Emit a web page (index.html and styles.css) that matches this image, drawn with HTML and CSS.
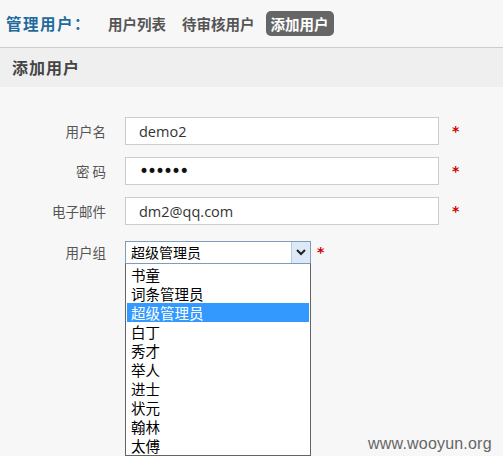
FILE: index.html
```html
<!DOCTYPE html>
<html lang="zh-CN">
<head>
<meta charset="utf-8">
<title>添加用户</title>
<link rel="stylesheet" href="styles.css">
</head>
<body>
<div class="page">
  <div class="topbar">
    <span class="topbar-title">管理用户：</span>
    <a class="tab">用户列表</a>
    <a class="tab">待审核用户</a>
    <a class="tab tab-active">添加用户</a>
  </div>
  <div class="section-head">添加用户</div>
  <form class="form">
    <div class="row">
      <label class="label">用户名</label>
      <input class="field" type="text" value="demo2">
      <span class="req">*</span>
    </div>
    <div class="row">
      <label class="label">密 码</label>
      <input class="field field-pass" type="password" value="123456">
      <span class="req">*</span>
    </div>
    <div class="row">
      <label class="label">电子邮件</label>
      <input class="field" type="text" value="dm2@qq.com">
      <span class="req">*</span>
    </div>
    <div class="row row-select">
      <label class="label">用户组</label>
      <div class="select-wrap">
        <div class="select">
          <span class="select-value">超级管理员</span>
          <span class="select-btn">
            <svg width="10" height="7" viewBox="0 0 10 7"><polyline points="1,1 5,5 9,1" fill="none" stroke="#222" stroke-width="2"/></svg>
          </span>
        </div>
        <ul class="dropdown">
          <li>书童</li>
          <li>词条管理员</li>
          <li class="selected">超级管理员</li>
          <li>白丁</li>
          <li>秀才</li>
          <li>举人</li>
          <li>进士</li>
          <li>状元</li>
          <li>翰林</li>
          <li>太傅</li>
        </ul>
      </div>
      <span class="req req-select">*</span>
    </div>
  </form>
  <div class="watermark">www.wooyun.org</div>
</div>
</body>
</html>
```

FILE: styles.css
```css
html, body {
  margin: 0;
  padding: 0;
  background: #f7f7f7;
  font-family: "Noto Sans CJK SC", "Noto Sans", sans-serif;
  overflow: hidden;
}
.page {
  position: relative;
  width: 503px;
  height: 456px;
  overflow: hidden;
}
.topbar {
  height: 47px;
  border-bottom: 1px solid #cccccc;
  background: #f7f7f7;
  display: flex;
  align-items: center;
  padding-left: 6px;
  box-sizing: content-box;
}
.topbar-title {
  font-size: 15.5px;
  font-weight: bold;
  color: #1f6a9c;
  letter-spacing: 1.5px;
  margin-right: 12px;
  line-height: 25px;
}
.tab {
  font-size: 14.5px;
  font-weight: bold;
  color: #555555;
  line-height: 25px;
  height: 25px;
  padding: 0 5px;
  margin-right: 6px;
  border-radius: 5px;
}
.tab-active {
  background: #666666;
  color: #ffffff;
}
.section-head {
  height: 39px;
  background: #efefef;
  padding-left: 12px;
  font-size: 16px;
  font-weight: bold;
  color: #444444;
  letter-spacing: 1px;
  line-height: 39px;
}
.form {
  margin: 0;
  padding-top: 30px;
}
.row {
  display: flex;
  align-items: center;
  height: 28px;
  margin-bottom: 12px;
}
.row-select {
  margin-top: 16px;
  height: 23px;
  align-items: flex-start;
}
.label {
  width: 106px;
  text-align: right;
  margin-right: 19px;
  font-size: 13.5px;
  color: #555555;
}
.row-select .label {
  line-height: 23px;
}
.field {
  box-sizing: border-box;
  width: 314px;
  height: 28px;
  margin: 0;
  border: 1px solid #cccccc;
  background: #ffffff;
  padding: 0 0 0 13px;
  font-family: "Open Sans", sans-serif;
  font-size: 14.5px;
  color: #333333;
  outline: none;
}
.field-pass {
  font-family: "DejaVu Sans", sans-serif;
  font-size: 17px;
  letter-spacing: -2px;
  color: #111111;
}
.req {
  margin-left: 13px;
  color: #cc0000;
  font-family: "DejaVu Sans", sans-serif;
  font-weight: bold;
  font-size: 14px;
}
.req-select {
  margin-left: 6px;
  line-height: 23px;
}
.select-wrap {
  position: relative;
  width: 186px;
  height: 23px;
}
.select {
  box-sizing: border-box;
  height: 23px;
  border: 1px solid #7f9db9;
  background: #ffffff;
  display: flex;
  align-items: center;
  justify-content: space-between;
}
.select-value {
  padding-left: 5px;
  font-size: 14px;
  color: #000000;
  line-height: 21px;
}
.select-btn {
  box-sizing: border-box;
  width: 19px;
  height: 21px;
  background: #dde9f6;
  border-left: 1px solid #b7cbe2;
  display: flex;
  align-items: center;
  justify-content: center;
}
.dropdown {
  position: absolute;
  left: 0;
  top: 22px;
  width: 186px;
  box-sizing: border-box;
  margin: 0;
  padding: 1px 1px 0;
  list-style: none;
  background: #ffffff;
  border: 1px solid #646464;
  border-top-color: #7f9db9;
}
.dropdown li {
  height: 19px;
  line-height: 19px;
  padding-left: 4px;
  font-size: 14.5px;
  color: #000000;
}
.dropdown li.selected {
  background: #3399ff;
  color: #ffffff;
}
.watermark {
  position: absolute;
  left: 368px;
  top: 435px;
  font-family: "Liberation Sans", Arial, sans-serif;
  font-size: 16px;
  letter-spacing: 0.2px;
  color: #666666;
}
```
